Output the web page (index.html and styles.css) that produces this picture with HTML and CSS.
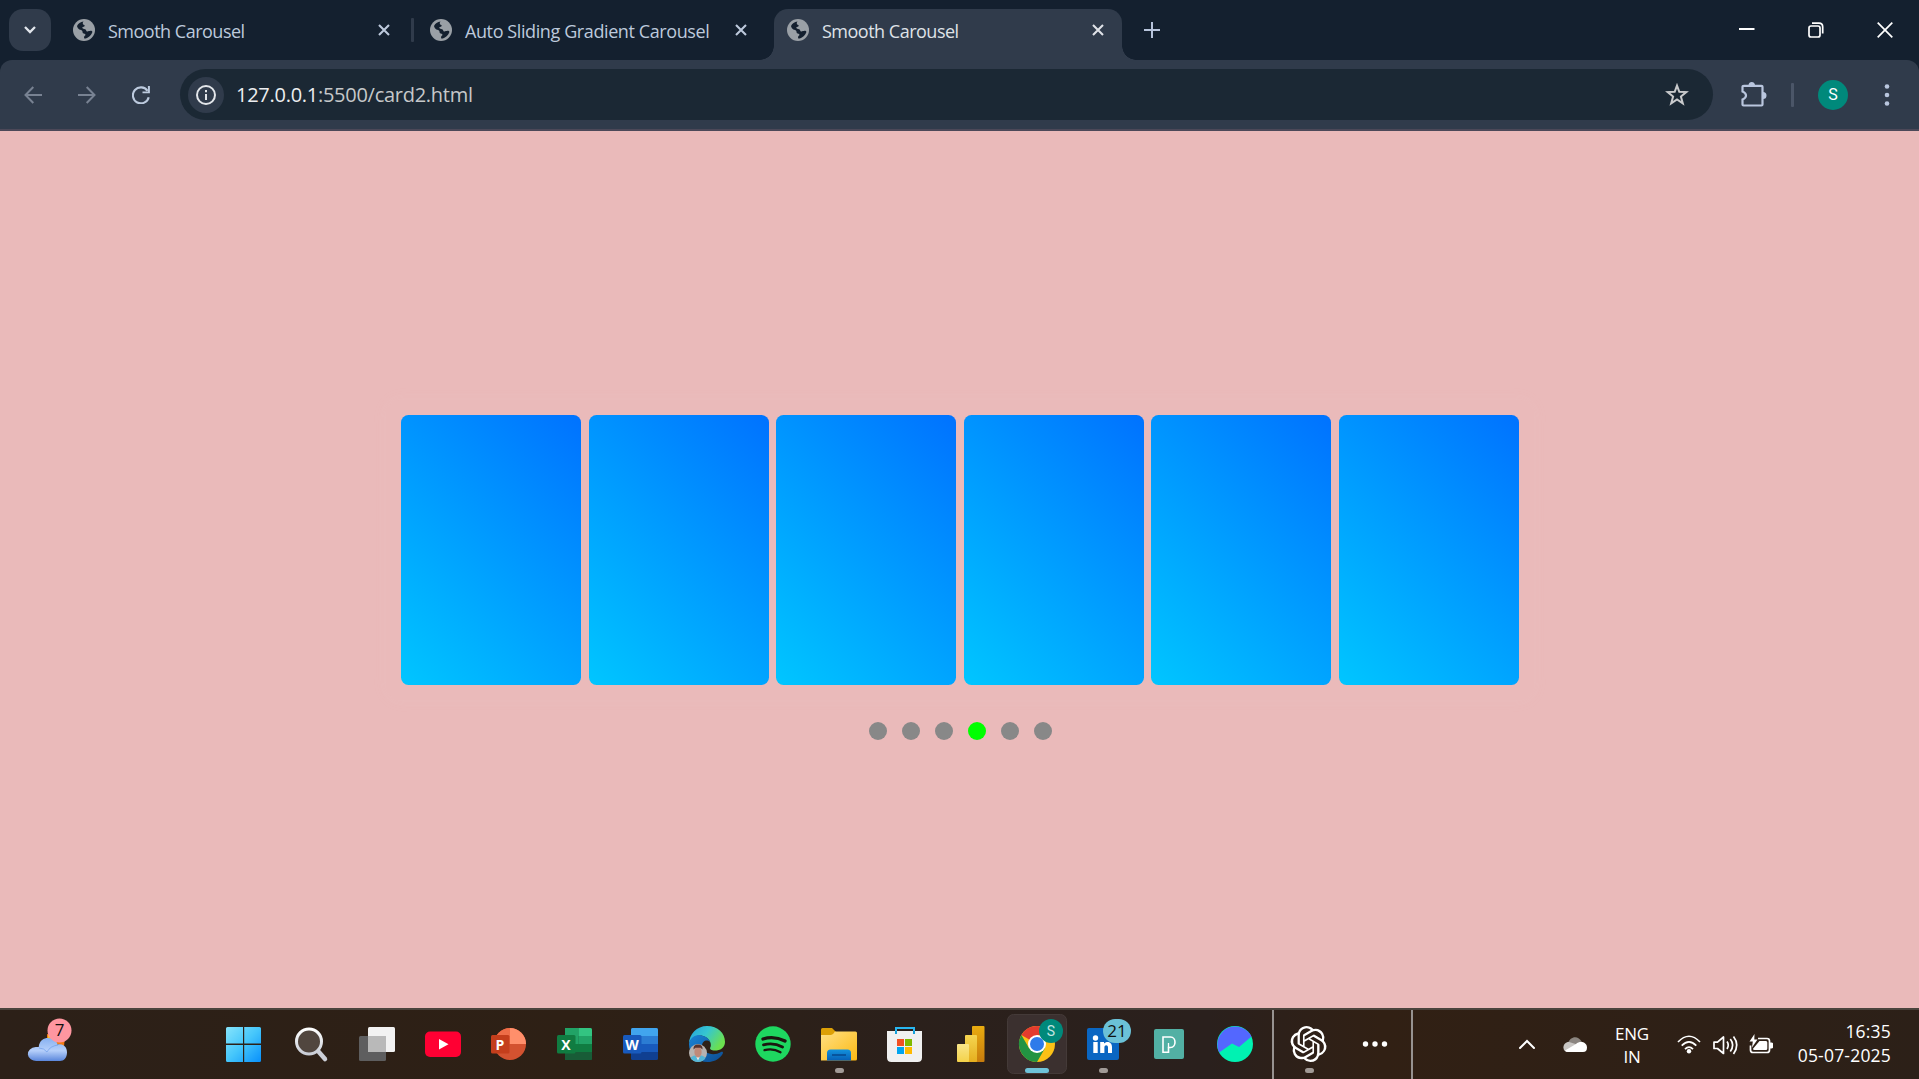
FILE: index.html
```html
<!DOCTYPE html>
<html lang="en">
<head>
<meta charset="utf-8">
<title>Smooth Carousel</title>
<link rel="stylesheet" href="styles.css">
</head>
<body>
<svg width="0" height="0" class="defs">
  <defs>
    <symbol id="globe" viewBox="0 0 22 22">
      <circle cx="11" cy="11" r="11" fill="#9aa0a6"/>
      <path class="sea" d="M4 7C5.200 4.600 7.500 3 10.500 2.500C9.300 3.900 9.500 5.400 11.200 6C12.500 6.600 11.300 7.800 9.800 8.100C8.700 8.600 9.300 9.800 11 9.900C13.200 10 13.200 11.500 13.600 12.200C14.500 13 16 11.900 17.500 11.800C18.700 11.800 19.300 12.300 19.400 12.900C18.200 16.500 15.200 19.300 11.300 19.500C10.800 18.500 11 17.300 12.200 16.600C13 15.600 12 14.800 10.600 14.600C9 14.300 10 12.300 8.900 11.500C7.800 10.600 6.500 11 5.500 9.800C4.800 9 4.200 8.300 4 7Z"/>
    </symbol>
    <symbol id="close" viewBox="0 0 12 12"><path d="M1 1L11 11M11 1L1 11" stroke="currentColor" stroke-width="2.100" fill="none"/></symbol>
    <symbol id="run" viewBox="0 0 9 5"><rect width="9" height="5" rx="2.500" fill="#a19a96"/></symbol>
    <linearGradient id="win" x2="1" y2="1"><stop stop-color="#86e4fb"/><stop offset=".5" stop-color="#45c6fb"/><stop offset="1" stop-color="#0890fb"/></linearGradient>
    <linearGradient id="cloud" x2="0" y2="1"><stop stop-color="#87b1f1"/><stop offset=".55" stop-color="#b5cffa"/><stop offset="1" stop-color="#5b87dc"/></linearGradient>
    <linearGradient id="glass" x2="0" y2="1"><stop stop-color="#fff"/><stop offset="1" stop-color="#c9cdd6"/></linearGradient>
    <linearGradient id="folder" x2="1" y2="1"><stop stop-color="#ffe083"/><stop offset="1" stop-color="#fcb913"/></linearGradient>
    <linearGradient id="tray" x2="0" y2="1"><stop stop-color="#1392dd"/><stop offset="1" stop-color="#0760b7"/></linearGradient>
    <linearGradient id="edgeTop" x2="1" y2=".5"><stop stop-color="#249fdc"/><stop offset=".5" stop-color="#36c6d0"/><stop offset="1" stop-color="#6be04f"/></linearGradient>
    <linearGradient id="edgeLow" x2="1" y2="1"><stop stop-color="#1983d5"/><stop offset="1" stop-color="#0d4c91"/></linearGradient>
    <linearGradient id="bar1" x2="0" y2="1"><stop stop-color="#e9ac10"/><stop offset="1" stop-color="#c77b0d"/></linearGradient>
    <linearGradient id="bar2" x2="0" y2="1"><stop stop-color="#f5d551"/><stop offset="1" stop-color="#e5ae1e"/></linearGradient>
    <linearGradient id="bar3" x2="0" y2="1"><stop stop-color="#f9e589"/><stop offset="1" stop-color="#f4d249"/></linearGradient>
  </defs>
</svg>

<header class="tabstrip">
  <button class="tab-search" aria-label="Search tabs"><svg width="14" height="10" viewBox="0 0 14 10"><path d="M2 2L7 7L12 2" fill="none" stroke="#e2e6ec" stroke-width="2.300"/></svg></button>
  <div class="tab">
    <svg class="favicon"><use href="#globe"/></svg><span class="tab-title">Smooth Carousel</span><svg class="tab-close"><use href="#close"/></svg>
  </div>
  <i class="tab-divider"></i>
  <div class="tab">
    <svg class="favicon"><use href="#globe"/></svg><span class="tab-title tab-title-long">Auto Sliding Gradient Carousel</span><svg class="tab-close"><use href="#close"/></svg>
  </div>
  <div class="tab tab-active">
    <svg class="favicon"><use href="#globe"/></svg><span class="tab-title">Smooth Carousel</span><svg class="tab-close"><use href="#close"/></svg>
  </div>
  <svg class="new-tab" viewBox="0 0 16 16"><path d="M8 0V16M0 8H16" stroke="#b7c4dc" stroke-width="2"/></svg>
  <div class="window-controls">
    <svg width="16" height="16" viewBox="0 0 16 16"><path d="M0 7H15.500" stroke="#fff" stroke-width="2"/></svg>
    <svg width="16" height="16" viewBox="0 0 16 16"><rect x="1" y="4" width="11" height="11" rx="2" fill="none" stroke="#fff" stroke-width="1.700"/><path d="M4 1.200H11Q14.700 1.200 14.700 5V11.500" fill="none" stroke="#fff" stroke-width="1.700"/></svg>
    <svg width="16" height="16" viewBox="0 0 16 16"><path d="M.7.700L15.300 15.300M15.300.700L.7 15.300" stroke="#fff" stroke-width="1.700"/></svg>
  </div>
</header>

<nav class="toolbar">
  <div class="nav-buttons">
    <svg width="18" height="18" viewBox="0 0 18 18"><path d="M18 9H2M9.300 1L1.500 9L9.300 17" fill="none" stroke="#788292" stroke-width="2"/></svg>
    <svg width="18" height="18" viewBox="0 0 18 18"><path d="M0 9H16M8.700 1L16.500 9L8.700 17" fill="none" stroke="#788292" stroke-width="2"/></svg>
    <svg width="18" height="18" viewBox="0 0 18 18"><path d="M15.500 4.800A8 8 0 1 0 16.700 11.200" fill="none" stroke="#bccade" stroke-width="2.100"/><path d="M17.900 0V7.300H10.500V5.400H15.900V0Z" fill="#bccade"/></svg>
  </div>
  <div class="omnibox">
    <span class="site-info"><svg width="20" height="20" viewBox="0 0 20 20"><circle cx="10" cy="10" r="9" fill="none" stroke="#e3e6ea" stroke-width="2"/><path d="M10 9V15M10 5V7.200" stroke="#e3e6ea" stroke-width="2"/></svg></span>
    <span class="url"><b>127.0.0.1</b>:5500/card2.html</span>
    <svg class="star" width="24" height="23" viewBox="0 0 24 23"><path d="M12 2.600L14.300 8.800L21.300 9.100L15.900 13.500L17.800 20.300L12 16.400L6.200 20.300L8.100 13.500L2.700 9.100L9.700 8.800Z" fill="none" stroke="#c9cacc" stroke-width="2"/></svg>
  </div>
  <svg class="puzzle" width="26" height="27" viewBox="0 0 26 27"><path d="M3 4.800H20.500Q21.500 4.800 21.500 5.800V23.500Q21.500 24.500 20.500 24.500H2.500Q1.500 24.500 1.500 23.500V18.500Q5 17 5 14.500Q5 12 1.500 10.500V6Q1.500 4.800 3 4.800Z" fill="none" stroke="#b9c6de" stroke-width="2.200"/><path d="M7.500 4A3.300 3.500 0 0 1 14 4ZM22 11A3.500 3.500 0 0 1 22 18Z" fill="#b9c6de"/></svg>
  <i class="toolbar-divider"></i>
  <span class="avatar">S</span>
  <svg class="kebab" width="6" height="24" viewBox="0 0 6 24"><g fill="#b9c6de"><circle cx="3" cy="3.500" r="2.300"/><circle cx="3" cy="12" r="2.300"/><circle cx="3" cy="20.500" r="2.300"/></g></svg>
</nav>

<main class="page">
  <div class="carousel">
    <div class="card"></div><div class="card"></div><div class="card"></div><div class="card"></div><div class="card"></div><div class="card"></div>
  </div>
  <div class="dots"><i></i><i></i><i></i><i class="on"></i><i></i><i></i></div>
</main>

<footer class="taskbar">
  <svg class="slot weather" viewBox="0 0 66 69"><path d="M31 24L49 27L48 36L31 31Z" fill="#f27a13"/><path d="M32 25h4v4h-4z" fill="#fbc02d"/><path d="M21 51A8.500 7 0 0 1 19.700 37C22 37 22.700 37 22.700 37C23.500 30 28 28 32 28C37 28 41 31 41.500 34.500C47.500 33 51 37 51 42.500C51 47.500 48 51 44 51Z" fill="url(#cloud)"/><path d="M23 38Q28 38 31 42Q34 36 42 35" stroke="#6f9ee9" stroke-width="1" fill="none" opacity=".7"/><circle cx="43.500" cy="20.500" r="12" fill="#fe96a0"/><text x="43.500" y="26" class="badge-text">7</text></svg>

  <div class="apps">
    <svg class="slot" viewBox="0 0 66 69"><path fill="url(#win)" d="M17.500 17H33V33.500H16V18.500Q16 17 17.500 17ZM34.200 17H49.500Q51 17 51 18.500V33.500H34.200ZM16 35H33V52H17.500Q16 52 16 50.500ZM34.200 35H51V50.500Q51 52 49.500 52H34.200Z"/></svg>
    <svg class="slot" viewBox="0 0 66 69"><path d="M42 41L49 49" stroke="#cdd0d8" stroke-width="4.500" stroke-linecap="round"/><circle cx="33" cy="31.500" r="12.500" fill="#51463f" stroke="url(#glass)" stroke-width="3"/></svg>
    <svg class="slot" viewBox="0 0 66 69"><rect x="17" y="26" width="27" height="25" rx="1.500" fill="#5e5e5f"/><rect x="26" y="17" width="27" height="25" rx="1.500" fill="#f2f2f2"/><path d="M26 26H44V42H26Z" fill="#b9b9b9"/></svg>
    <svg class="slot" viewBox="0 0 66 69"><rect x="17" y="21.500" width="36" height="25.500" rx="5" fill="#ff0033"/><path d="M31 29V39.500L40.500 34.200Z" fill="#fff"/></svg>
    <svg class="slot" viewBox="0 0 66 69"><circle cx="36" cy="34" r="16" fill="#d35230"/><path d="M36 18A16 16 0 0 0 20 34H36Z" fill="#ed6c47"/><path d="M36 18A16 16 0 0 1 52 34H36Z" fill="#ff8f6b"/><rect x="17" y="25" width="18.500" height="18.500" rx="1.500" fill="#c43e1c"/><text x="26" y="39.500" class="office">P</text></svg>
    <svg class="slot" viewBox="0 0 66 69"><rect x="25" y="18" width="27" height="32" rx="1.500" fill="#185c37"/><path d="M25 18H38.500V34H25Z" fill="#21a366"/><path d="M38.500 18H50.500Q52 18 52 19.500V26H38.500Z" fill="#33c481"/><path d="M38.500 26H52V34H38.500Z" fill="#21a366"/><path d="M25 34H52V42H38.500V50H25Z" fill="#107c41"/><path d="M25 42H52V48.500Q52 50 50.500 50H25Z" fill="#185c37"/><rect x="17" y="25" width="18.500" height="18.500" rx="1.500" fill="#107c41"/><text x="26" y="39.500" class="office">X</text></svg>
    <svg class="slot" viewBox="0 0 66 69"><rect x="25" y="18" width="27" height="32" rx="1.500" fill="#103f91"/><path d="M25 26V19.500Q25 18 26.500 18H50.500Q52 18 52 19.500V26Z" fill="#41a5ee"/><path d="M25 26H52V34H25Z" fill="#2b7cd3"/><path d="M25 34H52V42H25Z" fill="#185abd"/><rect x="17" y="25" width="18.500" height="18.500" rx="1.500" fill="#185abd"/><text x="26" y="39.500" class="office">W</text></svg>
    <svg class="slot" viewBox="0 0 66 69"><path d="M17 34C17 24 25 16 35 16C46 16 53 23 53 32C53 38 48 40.500 43 40.500C39 40.500 38 39 38 38C40 36 39 28 31 26C24 24 18 29 17 34Z" fill="url(#edgeTop)"/><path d="M17 34C18 27 25 23 31 26C36 27 38 31 38 32C35 29 30 31 30 36C31 43 41 47 49 42C52 41 51 44 50 45C46 50 41 52 36 52C25 52 17 44 17 34Z" fill="url(#edgeLow)"/><circle cx="26" cy="43" r="9" fill="#b7b3b1"/><path d="M18.500 48C21 44 31 44 33.500 48A9 9 0 0 1 18.500 48Z" fill="#54b6d6"/><path d="M23.500 45L26 50.500L28.500 45Z" fill="#eee"/><ellipse cx="26" cy="42" rx="3.600" ry="5.500" fill="#c08a79"/><path d="M21.500 39.500Q21 34.500 26 34.500T30.500 39.500L28.500 37.800L23.500 37.800Z" fill="#59332d"/></svg>
    <svg class="slot" viewBox="-2 0 66 69"><circle cx="33" cy="34" r="17.700" fill="#1ed760"/><g fill="none" stroke="#1b160f" stroke-linecap="round"><path d="M23 29Q34 25.500 45 31" stroke-width="3.300"/><path d="M23.500 34.800Q33.500 32 42.500 37" stroke-width="2.800"/><path d="M24.500 40.200Q33 38 40.500 42.200" stroke-width="2.300"/></g></svg>
    <svg class="slot" viewBox="0 0 66 69"><path d="M17 19.500Q17 18 18.500 18H28L32 22L28 27H17Z" fill="#dda006"/><path d="M17 25H27Q29 25 31 21.500H51.500Q53 21.500 53 23V49Q53 50.500 51.500 50.500H17Z" fill="url(#folder)"/><path d="M23 50.500V43Q23 39.500 26.500 39.500H43.500Q47 39.500 47 43V50.500Z" fill="url(#tray)"/><path d="M28 45H42" stroke="#074b91" stroke-width="1.600"/><use href="#run" x="31" y="58" width="9" height="5"/></svg>
    <svg class="slot" viewBox="0 0 66 69"><path d="M26 24V18H44V24" fill="none" stroke="#28b6f0" stroke-width="2"/><path d="M17 21H52V47.500Q52 52 47.500 52H21.500Q17 52 17 47.500Z" fill="#f0f0f0"/><path d="M26 21V24M44 21V24" stroke="#159fd9" stroke-width="2"/><path d="M27 29H34V36H27Z" fill="#f25022"/><path d="M35 29H42V36H35Z" fill="#7fba00"/><path d="M27 37H34V44H27Z" fill="#00a4ef"/><path d="M35 37H42V44H35Z" fill="#ffb900"/></svg>
    <svg class="slot" viewBox="0 0 66 69"><rect x="36" y="16" width="12.500" height="36" rx="1" fill="url(#bar1)"/><rect x="29" y="25" width="12" height="27" rx="1" fill="url(#bar2)"/><rect x="21" y="34" width="12" height="18" rx="1" fill="url(#bar3)"/></svg>
    <svg class="slot" viewBox="-2 0 66 69"><rect x="3.500" y="4.500" width="59" height="59" rx="6" fill="#3b302f" stroke="#443a38"/><circle cx="33" cy="34" r="18" fill="#fbc116"/><path d="M33 34L17.400 25A18 18 0 0 1 48.600 25H33Z" fill="#e33b2e"/><path d="M17.400 25A18 18 0 0 0 33 52L40.800 38.500L33 34L25.200 38.500Z" fill="#229342"/><circle cx="33" cy="34" r="9" fill="#fff"/><circle cx="33" cy="34" r="7" fill="#2e7bea"/><circle cx="47" cy="21" r="12" fill="#00897b"/><text x="47" y="26" class="profile">S</text><rect x="21" y="58" width="24" height="5" rx="2.500" fill="#6ec3d9"/></svg>
    <svg class="slot" viewBox="-2 0 66 69"><rect x="17" y="18" width="32" height="32" rx="2" fill="#0a66c2"/><circle cx="25.500" cy="28" r="2.700" fill="#fff"/><path d="M23.300 32H27.700V43H23.300ZM30.200 32H34V33.500C36 31 42 31 42 37V43H38V37.500C38 34.500 34.400 34.500 34.400 37.500V43H30.200Z" fill="#fff"/><rect x="33" y="9" width="28" height="24" rx="12" fill="#6bc1d7"/><text x="47" y="26.500" class="badge-text">21</text><use href="#run" x="29" y="58" width="9" height="5"/></svg>
    <svg class="slot" viewBox="-2 0 66 69"><rect x="18" y="19" width="30" height="30" rx="2" fill="#52b0a4"/><path d="M27 27H34.500C40.500 27 40.500 37.500 34.500 37.500H32.500V42.300H27Z" fill="none" stroke="#fff" stroke-width="1.600"/><path d="M32.500 37.500V33" stroke="#fff" stroke-width="1.300"/></svg>
    <svg class="slot" viewBox="-2 0 66 69"><circle cx="33" cy="34" r="18" fill="#00f2b2"/><path d="M17.200 42.500A18 18 0 0 1 49.500 26.500L37 37L30 33.500Z" fill="#5367ff"/></svg>
  </div>
  <div class="apps pinned">
    <svg class="slot" viewBox="0 0 66 69"><path transform="translate(14.500 16) scale(1.500)" fill="#fff" d="M22.2819 9.8211a5.9847 5.9847 0 0 0-.5157-4.9108 6.0462 6.0462 0 0 0-6.5098-2.9A6.0651 6.0651 0 0 0 4.9807 4.1818a5.9847 5.9847 0 0 0-3.9977 2.9 6.0462 6.0462 0 0 0 .7427 7.0966 5.98 5.98 0 0 0 .511 4.9107 6.051 6.051 0 0 0 6.5146 2.9001A5.9847 5.9847 0 0 0 13.2599 24a6.0557 6.0557 0 0 0 5.7718-4.2058 5.9894 5.9894 0 0 0 3.9977-2.9001 6.0557 6.0557 0 0 0-.7475-7.0729zm-9.022 12.6081a4.4755 4.4755 0 0 1-2.8764-1.0408l.1419-.0804 4.7783-2.7582a.7948.7948 0 0 0 .3927-.6813v-6.7369l2.02 1.1686a.071.071 0 0 1 .038.052v5.5826a4.504 4.504 0 0 1-4.4945 4.4944zm-9.6607-4.1254a4.4708 4.4708 0 0 1-.5346-3.0137l.142.0852 4.783 2.7582a.7712.7712 0 0 0 .7806 0l5.8428-3.3685v2.3324a.0804.0804 0 0 1-.0332.0615L9.74 19.9502a4.4992 4.4992 0 0 1-6.1408-1.6464zM2.3408 7.8956a4.485 4.485 0 0 1 2.3655-1.9728V11.6a.7664.7664 0 0 0 .3879.6765l5.8144 3.3543-2.0201 1.1685a.0757.0757 0 0 1-.071 0l-4.8303-2.7865A4.504 4.504 0 0 1 2.3408 7.872zm16.5963 3.8558L13.1038 8.364 15.1192 7.2a.0757.0757 0 0 1 .071 0l4.8303 2.7913a4.4944 4.4944 0 0 1-.6765 8.1042v-5.6772a.79.79 0 0 0-.407-.667zm2.0107-3.0231l-.142-.0852-4.7735-2.7818a.7759.7759 0 0 0-.7854 0L9.409 9.2297V6.8974a.0662.0662 0 0 1 .0284-.0615l4.8303-2.7866a4.4992 4.4992 0 0 1 6.6802 4.66zM8.3065 12.863l-2.02-1.1638a.0804.0804 0 0 1-.038-.0567V6.0742a4.4992 4.4992 0 0 1 7.3757-3.4537l-.142.0805L8.704 5.459a.7948.7948 0 0 0-.3927.6813zm1.0976-2.3654l2.602-1.4998 2.6069 1.4998v2.9994l-2.5974 1.4997-2.6067-1.4997Z"/><use href="#run" x="29" y="58" width="9" height="5"/></svg>
    <svg class="slot" viewBox="0 0 66 69"><g fill="#fff"><circle cx="23.500" cy="34" r="2.700"/><circle cx="33" cy="34" r="2.700"/><circle cx="42.500" cy="34" r="2.700"/></g></svg>
  </div>
  <div class="tray">
    <svg class="chevron" width="18" height="12" viewBox="0 0 18 12"><path d="M2 10L9 3L16 10" fill="none" stroke="#fff" stroke-width="2" stroke-linecap="round"/></svg>
    <svg class="onedrive" width="24" height="17" viewBox="0 0 24 17"><path d="M5 7C7 .5 15-1.500 19 6L12 11Z" fill="#8b8580"/><path d="M5 16C-1.500 16-1 6 6 6L16 9L5 16Z" fill="#c9c6c3"/><path d="M2 14.500L13 8C17 4.500 24 6 24 11.500Q24 16 20 16H5Q3 16 2 14.500Z" fill="#fff"/></svg>
    <div class="lang"><span>ENG</span><span>IN</span></div>
    <svg class="status" width="96" height="24" viewBox="0 0 96 24"><g fill="none" stroke="#fff" stroke-width="1.700"><path d="M1 9Q12-2.500 23 9"/><path d="M4.700 12.700Q12 5 19.300 12.700"/><path d="M8 16.200Q12 12 16 16.200"/><path d="M37 9.200H40.500L46.500 4V20.500L40.500 15.500H37Z" stroke-linejoin="round"/><path d="M50 8.500Q52.500 12 50 16M53.300 6Q58 12 53.300 18.500M56.500 3.500Q63 12 56.500 21"/><path d="M81 5.500H90Q92.500 5.500 92.500 8V17Q92.500 19.500 90 19.500H76Q73.500 19.500 73.500 17V12.500"/></g><circle cx="12" cy="18.300" r="2.200" fill="#fff"/><path d="M93 9.500H94.500Q96.500 9.500 96.500 12.500Q96.500 15.500 94.500 15.500H93ZM82.500 8H89Q90.300 8 90.300 9.500V15.500Q90.300 17 89 17H77.500Q76 17 76 15.700ZM77.500 1L72.500 8.500H75.800L75 14.500L80.500 6.500H77.300Z" fill="#fff"/></svg>
    <div class="clock"><span class="time">16:35</span><span class="date">05-07-2025</span></div>
  </div>
</footer>
</body>
</html>
```
FILE: styles.css
```css
* { box-sizing: border-box; }
body { margin: 0; width: 1919px; height: 1079px; overflow: hidden; display: flex; flex-direction: column; background: #14202f; font-family: "Open Sans", "Noto Sans", sans-serif; }
.defs { position: absolute; }
svg { display: block; flex: none; }

/* Tab strip */
.tabstrip { height: 60px; flex: none; display: flex; align-items: flex-start; padding: 9px 26px 0 9px; color: #bdc9dc; }
.tab-search { width: 42px; height: 42px; border: 0; border-radius: 14px; background: #303b4b; padding: 0; display: grid; place-items: center; }
.tab { width: 348px; height: 51px; display: flex; align-items: center; padding: 0 18px 9px 13px; }
.tab-search + .tab { margin-left: 9px; }
.tab-divider { width: 3px; height: 24px; margin: 9px 3px 0; background: #303b4b; border-radius: 1px; }
.favicon { width: 22px; height: 22px; }
.sea { fill: #14202f; }
.tab-active .sea { fill: #303b4b; }
.tab-title { flex: 1; margin-left: 13px; font-size: 18px; line-height: 24px; padding-top: 1px; letter-spacing: -0.500px; white-space: nowrap; }
.tab-title-long { letter-spacing: -0.400px; }
.tab-close { width: 12px; height: 14px; }
.tab-active { position: relative; margin-left: 9px; background: #303b4b; border-radius: 14px 14px 0 0; color: #dfe2e7; }
.tab-active::before, .tab-active::after { content: ""; position: absolute; bottom: 0; width: 14px; height: 14px; }
.tab-active::before { right: 100%; background: radial-gradient(circle at 0 0, transparent 13.500px, #303b4b 14px); }
.tab-active::after { left: 100%; background: radial-gradient(circle at 100% 0, transparent 13.500px, #303b4b 14px); }
.new-tab { width: 16px; height: 16px; margin: 13px 0 0 22px; }
.window-controls { margin-left: auto; display: flex; gap: 53px; padding-top: 13px; }

/* Toolbar */
.toolbar { height: 71px; flex: none; display: flex; align-items: center; padding: 0 29px 0 24px; background: #303b4b; border-radius: 12px 12px 0 0; border-bottom: 2px solid #4c4858; }
.nav-buttons { display: flex; gap: 36px; }
.omnibox { width: 1533px; height: 51px; margin: 0 28px 0 30px; border-radius: 26px; background: #1b2834; display: flex; align-items: center; padding: 0 24px 0 8px; }
.site-info { width: 36px; height: 36px; border-radius: 50%; background: #303b4b; display: grid; place-items: center; }
.url { margin-left: 12px; font-size: 20px; letter-spacing: -0.270px; color: #c6c8ca; }
.url b { font-weight: 400; color: #eceef0; }
.star { margin-left: auto; }
.toolbar-divider { width: 3px; height: 24px; margin: 0 24px; background: #4b5668; border-radius: 1px; }
.avatar { width: 30px; height: 30px; border-radius: 50%; background: #00897b; color: #fff; font: 16px/30px Roboto, sans-serif; text-align: center; }
.kebab { margin-left: 36px; }

/* Carousel page */
.page { flex: 1; background: #eababa; display: flex; flex-direction: column; align-items: center; padding: 269px 0 0 1px; }
.carousel { display: flex; gap: 7.600px; padding: 15px; border-radius: 15px; box-shadow: 0 0 15px rgba(255, 225, 225, 0.080); }
.card { width: 180px; height: 270px; border-radius: 7.500px; background: linear-gradient(45deg, #00c6ff, #0072ff); }
.dots { display: flex; gap: 15px; margin-top: 22px; padding-left: 1px; }
.dots i { width: 18px; height: 18px; border-radius: 50%; background: #888; }
.dots .on { background: #0f0; }

/* Taskbar */
.taskbar { height: 71px; flex: none; display: flex; background: linear-gradient(90deg, #2c2018, #2e2015 30%, #2b201b 47%, #2a201d 63%, #312014 72%, #2c2018); border-top: 2px solid #4a443d; color: #fff; }
.slot { width: 66px; height: 69px; }
.weather { margin-left: 15px; }
.weather + .apps { margin-left: 129px; }
.apps { display: flex; }
.weather { transform: translateX(1px); }
.badge-text { font: 17px "Open Sans", sans-serif; text-anchor: middle; fill: #111; }
.office { font: 700 14px "Open Sans", sans-serif; text-anchor: middle; fill: #fff; }
.profile { font: 14px Roboto, sans-serif; text-anchor: middle; fill: #c3e5e1; }
.pinned { margin-left: 6px; border: solid #979290; border-width: 0 2px; width: 141px; padding-left: 2px; }
.tray { flex: 1; display: flex; align-items: center; padding-right: 28px; font-size: 17px; }
.chevron { margin: 0 0 1px 105px; }
.onedrive { margin-left: 27px; }
.lang { width: 36px; margin-left: 27px; display: flex; flex-direction: column; align-items: center; line-height: 23px; letter-spacing: -0.200px; }
.status { margin-left: 27px; }
.clock { margin-left: auto; padding-bottom: 4px; display: flex; flex-direction: column; align-items: flex-end; font-size: 17.500px; line-height: 24px; letter-spacing: 0.200px; }
```
